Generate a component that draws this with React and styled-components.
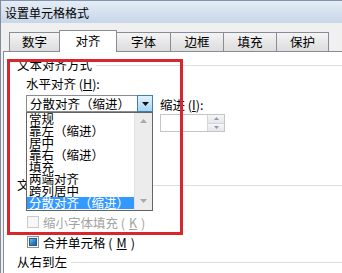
import styled, { createGlobalStyle } from 'styled-components';

const GlobalStyle = createGlobalStyle`
    html, body {
        margin: 0;
        padding: 0;
        background: #ffffff;
    }
    body {
        font-family: "Noto Sans CJK SC", "Liberation Sans", sans-serif;
        font-size: 12.5px;
        color: #000;
    }
    #root {
        width: 342px;
        height: 273px;
        overflow: hidden;
    }
    u {
        text-decoration-thickness: 1px;
        text-underline-offset: 1px;
    }
`;

const Window = styled.div`
    position: relative;
    width: 360px;
    height: 273px;
    box-sizing: border-box;
    border-left: 1px solid #7f8c9c;
    background: #f0f0f0;
`;

const TitleBar = styled.div`
    height: 23px;
    box-sizing: border-box;
    border-top: 1px solid #8294ab;
    background: linear-gradient(#e5edf6, #c7d6e9);
    padding: 2px 0 0 4px;
    line-height: 19px;
    font-size: 12px;
`;

const Body = styled.div`
    padding: 7px 0 0 2px;
`;

const TabRow = styled.div`
    display: flex;
    align-items: flex-end;
    height: 21px;
    padding-left: 7px;
`;

const Tab = styled.div`
    position: relative;
    z-index: ${(p) => (p.$active ? 2 : 1)};
    box-sizing: border-box;
    width: ${(p) => p.$w}px;
    height: ${(p) => (p.$active ? 22 : 19)}px;
    margin-bottom: ${(p) => (p.$active ? -1 : 0)}px;
    margin-left: -1px;
    border: 1px solid #898c95;
    border-bottom: none;
    background: ${(p) =>
        p.$active ? '#ffffff' : 'linear-gradient(#f4f4f4, #dcdcdc)'};
    text-align: center;
    line-height: ${(p) => (p.$active ? 20 : 18)}px;
`;

const Panel = styled.div`
    position: relative;
    height: 300px;
    box-sizing: border-box;
    border: 1px solid #898c95;
    background: #ffffff;
    padding-top: 6px;
`;

const Group = styled.div`
    padding-left: 13px;
    margin-top: ${(p) => p.$mt || 0}px;
`;

const GroupHead = styled.div`
    display: flex;
    align-items: center;
    gap: 4px;
    height: 14px;
    line-height: 14px;
    white-space: nowrap;
    &::after {
        content: '';
        flex: 1;
        height: 1px;
        background: #d8dde2;
    }
`;

const GroupBody = styled.div`
    padding-left: 9px;
`;

const AlignRow = styled.div`
    display: flex;
    gap: 7px;
    margin-top: 4px;
`;

const Col = styled.div`
    display: flex;
    flex-direction: column;
    width: ${(p) => (p.$w ? `${p.$w}px` : 'auto')};
`;

const FieldLabel = styled.div`
    height: 16px;
    line-height: 16px;
    margin-top: ${(p) => p.$mt || 0}px;
    white-space: nowrap;
`;

const ComboWrap = styled.div`
    position: relative;
    margin-top: 3px;
`;

const Combo = styled.div`
    display: flex;
    height: 17px;
    box-sizing: border-box;
    border: 1px solid #8a8c90;
    background: #ffffff;
`;

const ComboText = styled.div`
    flex: 1;
    padding-left: 3px;
    line-height: 15px;
    white-space: nowrap;
    overflow: hidden;
`;

const ComboButton = styled.div`
    width: 16px;
    box-sizing: border-box;
    border: 1px solid #3c7fb1;
    margin: -1px -1px -1px 0;
    height: 17px;
    background: linear-gradient(#e3f2fc, #a9d4f0);
    display: flex;
    align-items: center;
    justify-content: center;
`;

const DropList = styled.div`
    position: absolute;
    top: 100%;
    left: 0;
    right: 0;
    z-index: 5;
    height: 99px;
    box-sizing: border-box;
    border: 1px solid #646464;
    background: #ffffff;
    display: flex;
`;

const Items = styled.div`
    flex: 1;
    overflow: hidden;
`;

const Item = styled.div`
    height: 12px;
    line-height: 12px;
    padding-left: 2px;
    white-space: nowrap;
    background: ${(p) => (p.$selected ? '#3399ff' : 'transparent')};
    color: ${(p) => (p.$selected ? '#ffffff' : '#000000')};
`;

const ScrollBar = styled.div`
    width: 17px;
    background: #ececec;
    border-left: 1px solid #e2e2e2;
    display: flex;
    flex-direction: column;
    justify-content: space-between;
    align-items: center;
    padding: 6px 0 7px;
`;

const CheckRow = styled.div`
    display: flex;
    align-items: center;
    gap: 4px;
    height: 20px;
    margin-top: ${(p) => p.$mt || 0}px;
    white-space: nowrap;
    color: ${(p) => (p.$disabled ? '#a3a3a3' : '#000000')};
`;

const CheckBox = styled.div`
    width: 12px;
    height: 12px;
    margin-left: 1px;
    box-sizing: border-box;
    border: 1px solid ${(p) => (p.$disabled ? '#cacaca' : '#8e8f8f')};
    background: ${(p) => (p.$disabled ? '#f7f7f7' : 'linear-gradient(#f2f2f2, #ffffff)')};
    display: flex;
    align-items: center;
    justify-content: center;
`;

const Mixed = styled.div`
    width: 8px;
    height: 8px;
    box-sizing: border-box;
    border: 1px solid #1d5f93;
    background: linear-gradient(135deg, #7ec0ea, #2a7dbd 60%, #1c6aa6);
`;

const Spin = styled.div`
    display: flex;
    width: 65px;
    height: 18px;
    margin-top: 1px;
    box-sizing: border-box;
    border: 1px solid #c2c5ca;
    background: #ffffff;
`;

const SpinField = styled.div`
    flex: 1;
`;

const SpinButtons = styled.div`
    width: 16px;
    display: flex;
    flex-direction: column;
    border-left: 1px solid #d4d6da;
`;

const SpinButton = styled.div`
    flex: 1;
    display: flex;
    align-items: center;
    justify-content: center;
    background: linear-gradient(#f6f6f6, #e4e6ea);
    border-top: ${(p) => (p.$down ? '1px solid #d4d6da' : 'none')};
`;

const RedMark = styled.div`
    position: absolute;
    left: 6px;
    top: 59px;
    width: 176px;
    height: 176px;
    box-sizing: border-box;
    border: 3px solid #d7262e;
    pointer-events: none;
    z-index: 10;
`;

const Arrow = ({ up, color, w = 7, h = 4 }) => (
    <svg width={w} height={h} viewBox={`0 0 ${w} ${h}`}>
        <polygon
            points={
                up
                    ? `0,${h} ${w},${h} ${w / 2},0`
                    : `0,0 ${w},0 ${w / 2},${h}`
            }
            fill={color}
        />
    </svg>
);

const tabs = [
    { label: '数字', w: 51 },
    { label: '对齐', w: 58, active: true },
    { label: '字体', w: 55 },
    { label: '边框', w: 54 },
    { label: '填充', w: 54 },
    { label: '保护', w: 53 },
];

const options = [
    '常规',
    '靠左（缩进）',
    '居中',
    '靠右（缩进）',
    '填充',
    '两端对齐',
    '跨列居中',
    '分散对齐（缩进）',
];

export default function App() {
    const selected = '分散对齐（缩进）';

    return (
        <>
            <GlobalStyle />
            <Window>
                <TitleBar>设置单元格格式</TitleBar>
                <Body>
                    <TabRow>
                        {tabs.map((t) => (
                            <Tab key={t.label} $w={t.w} $active={t.active}>
                                {t.label}
                            </Tab>
                        ))}
                    </TabRow>
                    <Panel>
                        <Group>
                            <GroupHead>文本对齐方式</GroupHead>
                            <GroupBody>
                                <AlignRow>
                                    <Col $w={127}>
                                        <FieldLabel>
                                            水平对齐 (<u>H</u>):
                                        </FieldLabel>
                                        <ComboWrap>
                                            <Combo>
                                                <ComboText>{selected}</ComboText>
                                                <ComboButton>
                                                    <Arrow color="#111" />
                                                </ComboButton>
                                            </Combo>
                                            <DropList>
                                                <Items>
                                                    {options.map((o) => (
                                                        <Item key={o} $selected={o === selected}>
                                                            {o}
                                                        </Item>
                                                    ))}
                                                </Items>
                                                <ScrollBar>
                                                    <Arrow up color="#a8a8a8" />
                                                    <Arrow color="#a8a8a8" />
                                                </ScrollBar>
                                            </DropList>
                                        </ComboWrap>
                                        <FieldLabel $mt={4}>
                                            垂直对齐 (<u>V</u>):
                                        </FieldLabel>
                                        <ComboWrap>
                                            <Combo>
                                                <ComboText>居中</ComboText>
                                            </Combo>
                                        </ComboWrap>
                                        <CheckRow>
                                            <CheckBox $disabled />
                                            两端分散对齐 (<u>E</u>)
                                        </CheckRow>
                                    </Col>
                                    <Col>
                                        <FieldLabel $mt={21}>
                                            缩进 (<u>I</u>):
                                        </FieldLabel>
                                        <Spin>
                                            <SpinField />
                                            <SpinButtons>
                                                <SpinButton>
                                                    <Arrow up color="#8c9ab0" w={5} h={3} />
                                                </SpinButton>
                                                <SpinButton $down>
                                                    <Arrow color="#8c9ab0" w={5} h={3} />
                                                </SpinButton>
                                            </SpinButtons>
                                        </Spin>
                                    </Col>
                                </AlignRow>
                            </GroupBody>
                        </Group>
                        <Group $mt={6}>
                            <GroupHead>文本控制</GroupHead>
                            <GroupBody>
                                <CheckRow>
                                    <CheckBox />
                                    自动换行 (<u>W</u>)
                                </CheckRow>
                                <CheckRow $disabled>
                                    <CheckBox $disabled />
                                    缩小字体填充 (<u>K</u>)
                                </CheckRow>
                                <CheckRow>
                                    <CheckBox>
                                        <Mixed />
                                    </CheckBox>
                                    合并单元格 (<u>M</u>)
                                </CheckRow>
                            </GroupBody>
                        </Group>
                        <Group $mt={3}>
                            <GroupHead>从右到左</GroupHead>
                        </Group>
                    </Panel>
                </Body>
                <RedMark />
            </Window>
        </>
    );
}
